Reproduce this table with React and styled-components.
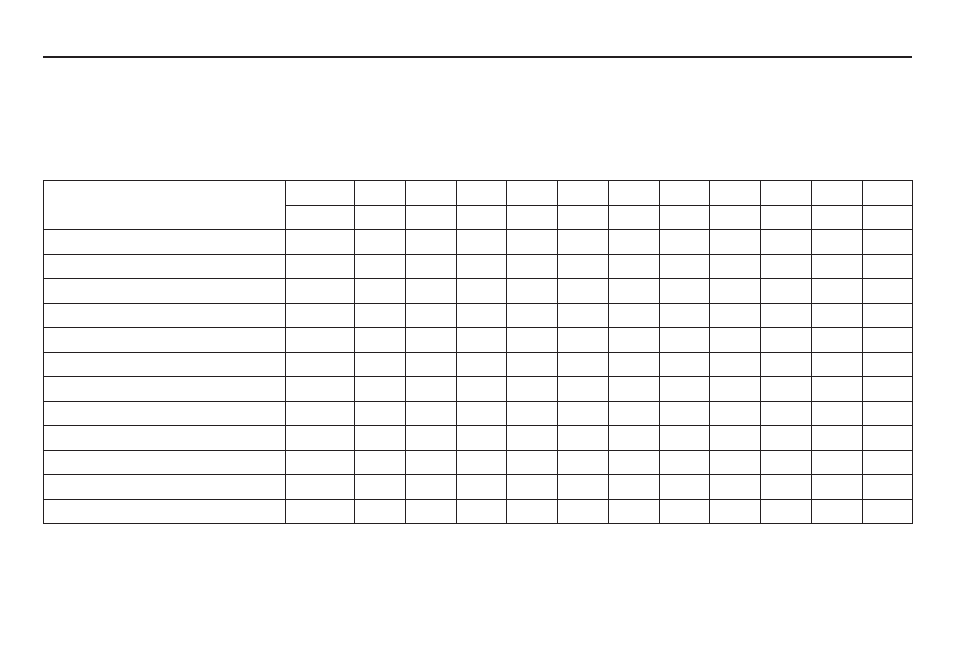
import React from "react";
import styled, { createGlobalStyle } from "styled-components";

const GlobalStyle = createGlobalStyle`
  html, body {
    margin: 0;
    padding: 0;
    background: #ffffff;
    font-family: "Liberation Sans", Arial, sans-serif;
  }
`;

const INK = "#231f20";
const COLS = [241, 68, 50, 50, 49, 50, 50, 50, 49, 50, 50, 50, 49];
const ROWS = [24, 23, 24, 23, 24, 23, 24, 23, 24, 23, 24, 23, 24, 23];

export default function App() {
  const bodyRows = ROWS.length - 2;
  return (
    <Page>
      <GlobalStyle />
      <Rule />
      <Grid>
        <HeadLabel />
        {COLS.slice(1).map((_, i) => (
          <Cell key={"h1-" + i} />
        ))}
        {COLS.slice(1).map((_, i) => (
          <Cell key={"h2-" + i} />
        ))}
        {Array.from({ length: bodyRows }).map((_, r) =>
          COLS.map((_, c) => <Cell key={r + "-" + c} />)
        )}
      </Grid>
    </Page>
  );
}

const Page = styled.div`
  padding: 56px 0 0 43px;
  width: 954px;
  height: 652px;
  box-sizing: border-box;
`;

const Rule = styled.div`
  width: 869px;
  height: 2px;
  background: ${INK};
`;

const Grid = styled.div`
  margin-top: 122px;
  display: grid;
  grid-template-columns: ${COLS.map((w) => w + "px").join(" ")};
  grid-template-rows: ${ROWS.map((h) => h + "px").join(" ")};
  gap: 1px;
  padding: 1px;
  width: max-content;
  background: ${INK};
`;

const Cell = styled.div`
  background: #ffffff;
`;

const HeadLabel = styled(Cell)`
  grid-row: span 2;
`;
